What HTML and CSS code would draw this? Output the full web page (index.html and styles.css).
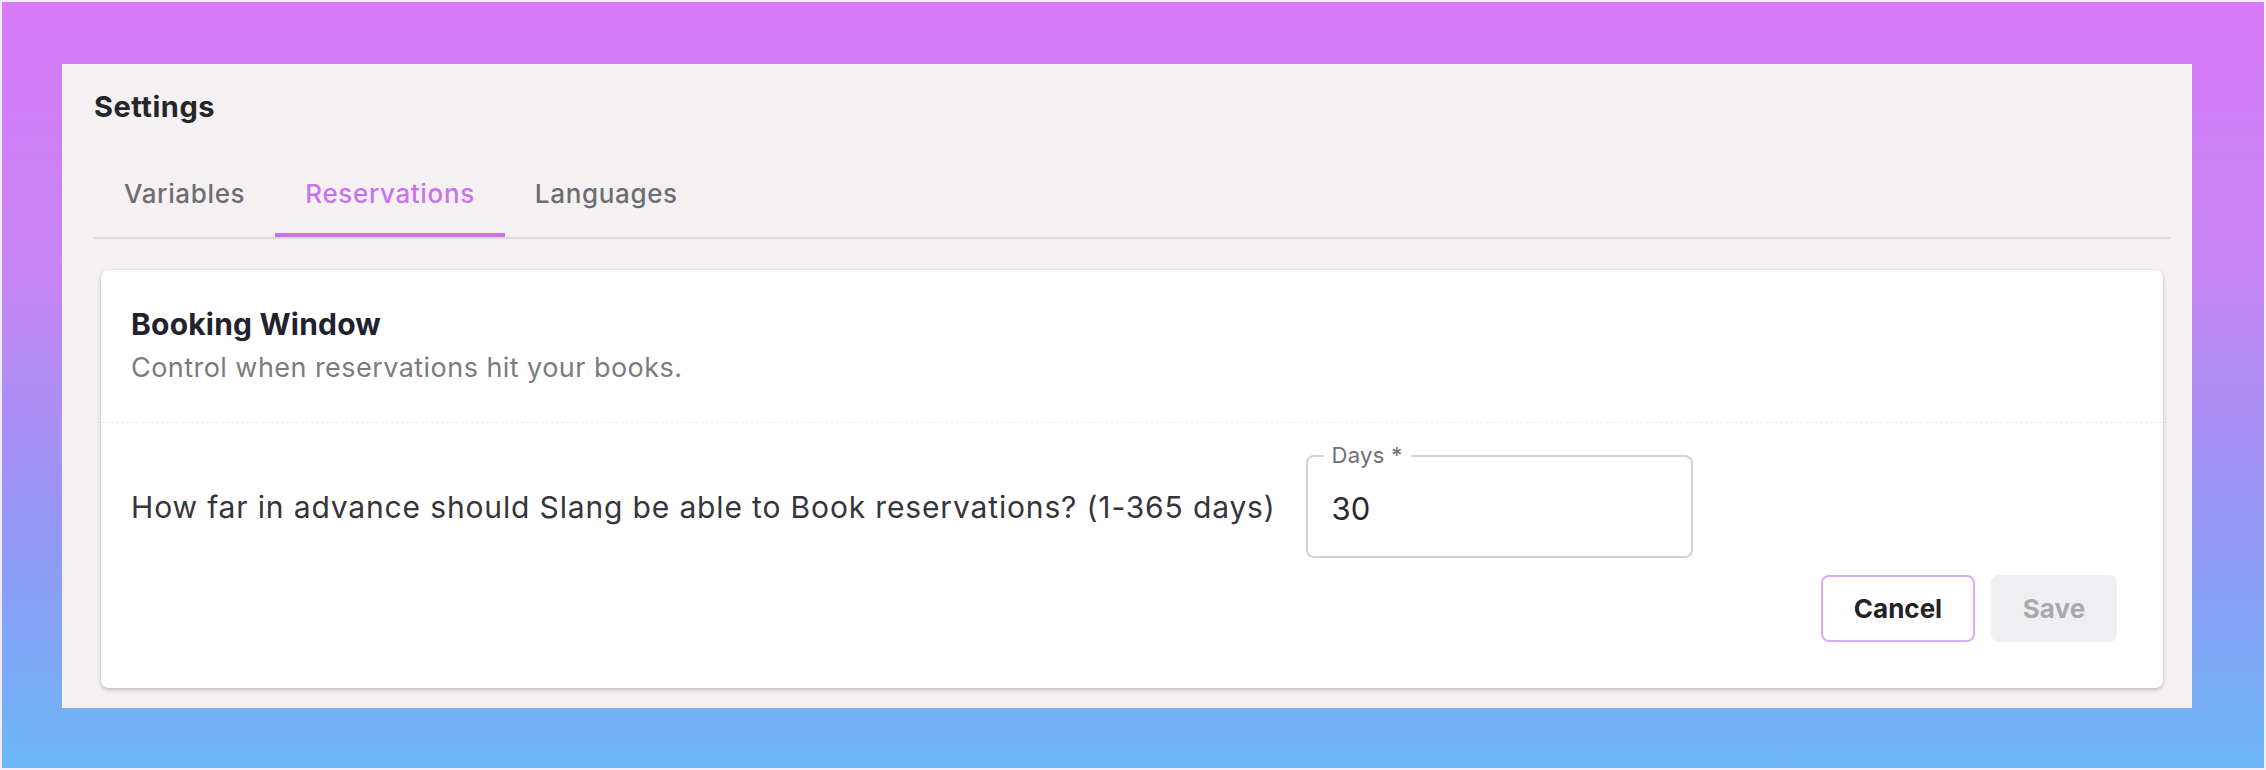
FILE: index.html
```html
<!DOCTYPE html>
<html lang="en">
<head>
<meta charset="utf-8">
<title>Settings</title>
<link rel="stylesheet" href="styles.css">
</head>
<body>
<div class="frame">
  <div class="panel">
    <h1 class="page-title">Settings</h1>
    <nav class="tabs">
      <span class="tab">Variables</span>
      <span class="tab tab-active">Reservations</span>
      <span class="tab">Languages</span>
    </nav>
    <section class="card">
      <header class="card-header">
        <h2 class="card-title">Booking Window</h2>
        <p class="card-desc">Control when reservations hit your books.</p>
      </header>
      <div class="card-body">
        <div class="field-row">
          <span class="question">How far in advance should Slang be able to Book reservations? (1-365 days)</span>
          <div class="input-box">
            <span class="input-label">Days *</span>
            <span class="input-value">30</span>
          </div>
        </div>
        <div class="actions">
          <button class="btn btn-cancel">Cancel</button>
          <button class="btn btn-save">Save</button>
        </div>
      </div>
    </section>
  </div>
</div>
</body>
</html>
```
FILE: styles.css
```css
* { box-sizing: border-box; }
html, body { margin: 0; padding: 0; }
body {
  width: 2266px;
  height: 770px;
  overflow: hidden;
  font-family: Inter, "Noto Sans", sans-serif;
}
.frame {
  height: 770px;
  border: 2px solid #f1ecf7;
  padding: 62px 72px 60px 60px;
  background: linear-gradient(180deg, #d77bf8 0%, #c886f5 35%, #9a95f4 65%, #6cb7f8 100%);
  display: flex;
}
.panel {
  flex: 1;
  background: #f5f1f3;
  padding: 26px 22px 20px 32px;
  display: flex;
  flex-direction: column;
}
.page-title {
  margin: 0;
  font-size: 29px;
  line-height: 34px;
  font-weight: 700;
  color: #262629;
  letter-spacing: 0.5px;
}
.tabs {
  margin-top: 29px;
  display: flex;
  border-bottom: 2px solid #dcd9dc;
}
.tab {
  padding: 24px 30px 22px;
  font-size: 26px;
  line-height: 34px;
  font-weight: 500;
  color: #6e6d73;
  letter-spacing: 0.65px;
  border-bottom: 4px solid transparent;
}
.tab-active {
  color: #c873ec;
  border-bottom-color: #c873ec;
}
.card {
  margin: 31px 7px 0;
  background: #ffffff;
  border-radius: 8px;
  box-shadow: 0 2px 4px rgba(0, 0, 0, 0.22), 0 0 2px rgba(0, 0, 0, 0.06);
}
.card-header {
  padding: 38px 30px 40px;
  border-bottom: 1px dashed #ebe9eb;
}
.card-title {
  margin: 0;
  font-size: 30px;
  line-height: 32px;
  font-weight: 700;
  color: #22222f;
  letter-spacing: 0.2px;
}
.card-desc {
  margin: 14px 0 0;
  font-size: 27px;
  line-height: 28px;
  color: #7b7b7e;
  letter-spacing: 0.45px;
}
.card-body {
  padding: 32px 46px 46px 30px;
}
.field-row {
  display: flex;
  align-items: center;
  gap: 30px;
}
.question {
  font-size: 30px;
  line-height: 34px;
  color: #35353b;
  letter-spacing: 0.85px;
}
.input-box {
  position: relative;
  width: 387px;
  height: 103px;
  border: 2px solid #d3d2d6;
  border-radius: 8px;
  display: flex;
  align-items: center;
  padding-left: 24px;
}
.input-label {
  position: absolute;
  top: -15px;
  left: 16px;
  padding: 0 8px;
  background: #ffffff;
  font-size: 22px;
  line-height: 26px;
  color: #6f6f73;
  letter-spacing: 0.3px;
}
.input-value {
  font-size: 31px;
  line-height: 34px;
  color: #2a2a2e;
  margin-top: 4px;
}
.actions {
  margin-top: 17px;
  display: flex;
  justify-content: flex-end;
  gap: 16px;
}
.btn {
  height: 67px;
  border-radius: 8px;
  font-family: Inter, "Noto Sans", sans-serif;
  font-size: 26px;
  font-weight: 700;
  padding: 0;
}
.btn-cancel {
  width: 154px;
  background: #ffffff;
  border: 2px solid #d8aef0;
  color: #22222b;
}
.btn-save {
  width: 126px;
  background: #efeff2;
  border: none;
  color: #a9a9ad;
}
```
